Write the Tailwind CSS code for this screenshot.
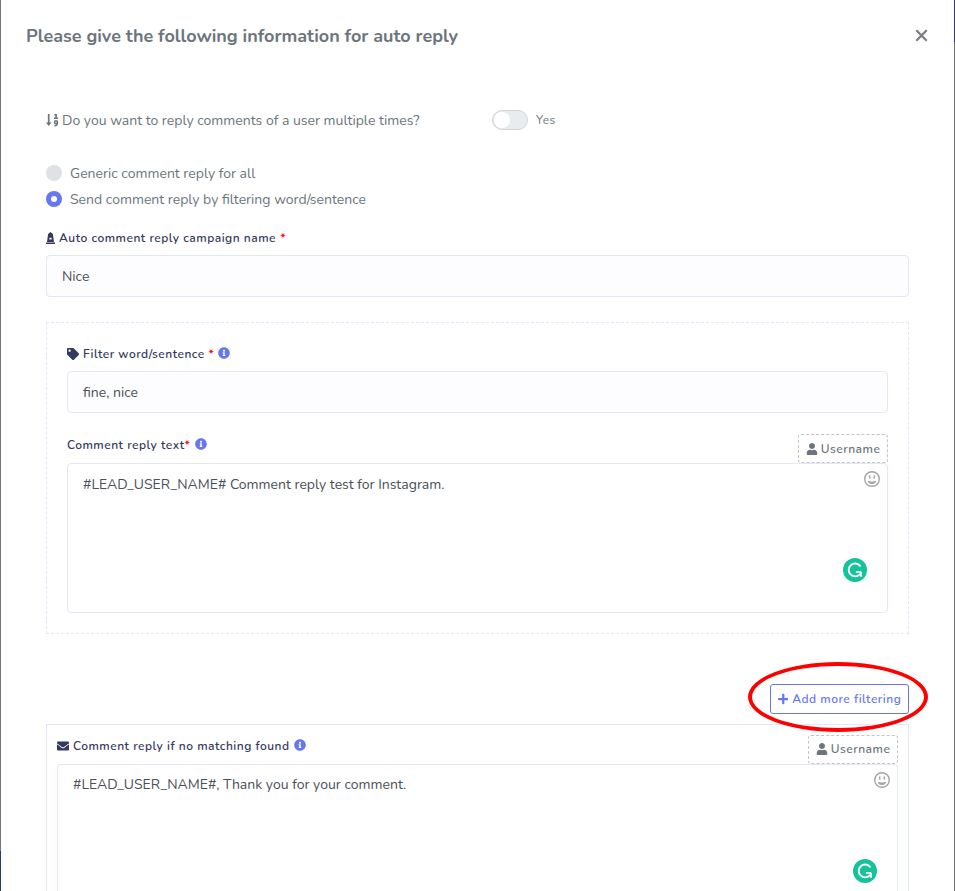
<!DOCTYPE html>
<html lang="en">
<head>
<meta charset="utf-8">
<title>Auto reply</title>
<script src="https://cdn.jsdelivr.net/npm/@tailwindcss/browser@4"></script>
</head>
<body class="h-[891px] overflow-hidden bg-white font-['Nunito','Lato',sans-serif] text-sm text-[#6c757d]">
<svg class="hidden">
  <symbol id="info" viewBox="0 0 512 512"><path fill="currentColor" d="M256 8C119.043 8 8 119.083 8 256c0 136.997 111.043 248 248 248s248-111.003 248-248C504 119.083 392.957 8 256 8zm0 110c23.196 0 42 18.804 42 42s-18.804 42-42 42-42-18.804-42-42 18.804-42 42-42zm56 254c0 6.627-5.373 12-12 12h-88c-6.627 0-12-5.373-12-12v-24c0-6.627 5.373-12 12-12h12v-64h-12c-6.627 0-12-5.373-12-12v-24c0-6.627 5.373-12 12-12h64c6.627 0 12 5.373 12 12v100h12c6.627 0 12 5.373 12 12v24z"/></symbol>
  <symbol id="user" viewBox="0 0 448 512"><path fill="currentColor" d="M224 256c70.7 0 128-57.3 128-128S294.7 0 224 0 96 57.3 96 128s57.3 128 128 128zm89.6 32h-16.7c-22.2 10.2-46.9 16-72.9 16s-50.6-5.8-72.9-16h-16.7C60.2 288 0 348.2 0 422.4V464c0 26.5 21.5 48 48 48h352c26.500 0 48-21.500 48-48v-41.600c0-74.200-60.200-134.400-134.400-134.400z"/></symbol>
  <symbol id="smile" viewBox="0 0 16 16"><circle cx="8" cy="8" r="7.300" fill="none" stroke="currentColor" stroke-width="1.400"/><rect x="5" y="4.200" width="1.500" height="3.600" rx=".75" fill="currentColor"/><rect x="9.500" y="4.200" width="1.500" height="3.600" rx=".75" fill="currentColor"/><path fill="currentColor" d="M3.800 9.700c2.600 1 5.800 1 8.400 0-.1 2-1.900 3.300-4.200 3.300s-4.100-1.300-4.200-3.300z"/></symbol>
  <symbol id="grammar" viewBox="0 0 24 24"><circle cx="12" cy="12" r="12" fill="#15c39a"/><path d="M17 7.800A6.400 6.400 0 1 0 16.800 16.300" fill="none" stroke="#fff" stroke-width="1.900" stroke-linecap="round"/><path d="M12.900 13.900h5.300M18 13.900v4.900" fill="none" stroke="#fff" stroke-width="1.800"/></symbol>
</svg>
<div class="flex h-full">
  <div class="flex w-px shrink-0 flex-col"><div class="h-[851px] bg-[#757575]"></div><div class="flex-1 bg-[#2f3773]"></div></div>
  <main class="w-[953px] shrink-0">
    <header class="flex h-[71px] items-center justify-between pr-[26px] pl-[25px]">
      <h1 class="text-lg font-bold">Please give the following information for auto reply</h1>
      <svg class="size-[13px]" viewBox="0 0 13 13" fill="none" stroke="#7d7b86" stroke-width="2.300"><path d="M1.300 1.300l10.400 10.400M11.700 1.300l-10.400 10.400"/></svg>
    </header>

    <div class="pr-[45px] pl-[45px]">
      <div class="mt-[38px] flex h-[22px] items-center">
        <svg class="mr-[3px] h-3.500 h-[14px] w-[13px]" viewBox="0 0 13 14" fill="none" stroke="currentColor"><path d="M2.700 1v10" stroke-width="1.700"/><path d="M-.1 9.400h5.600L2.700 13z" fill="currentColor" stroke="none"/><path d="M8.300 1.800h1.800v3.500M7.900 5.300h4.200" stroke-width="1.600"/><circle cx="10" cy="9.300" r="1.500" stroke-width="1.500"/><path d="M11.500 9.400c0 2.100-.8 3.300-3.100 3.300" stroke-width="1.500"/></svg>
        <span class="w-[430px] pt-0.5">Do you want to reply comments of a user multiple times?</span>
        <span class="flex h-5 w-9 items-center rounded-full border border-[#ced4da] bg-[#e9ecef] pl-px"><span class="size-4 rounded-full bg-white"></span></span>
        <span class="ml-2 text-xs tracking-[.5px]">Yes</span>
      </div>

      <div class="mt-[29px] flex h-[26px] items-center gap-2"><span class="size-4 rounded-full bg-[#dfe1e5]"></span><span class="pt-0.5">Generic comment reply for all</span></div>
      <div class="flex h-[26px] items-center gap-2"><span class="flex size-4 items-center justify-center rounded-full bg-[#6777ef]"><span class="size-1.5 rounded-full bg-white"></span></span><span class="pt-0.5">Send comment reply by filtering word/sentence</span></div>

      <div class="mt-[17px] flex h-[18px] items-center text-xs font-semibold tracking-[.5px] text-[#34395e]">
        <svg class="mr-1 h-3 w-[9px]" viewBox="0 0 9 12" fill="currentColor"><path fill-rule="evenodd" d="M4.500 0L6.900 2l1.100 8H1l1.100-8zM3.400 5.800v1.600h2.200V5.800z"/><rect y="10.500" width="9" height="1.500"/></svg>
        Auto comment reply campaign name&nbsp;<span class="ml-[.5px] text-[#f00]">*</span>
      </div>
      <div class="mt-2 flex h-[42px] items-center rounded-[4px] border border-[#e4e6fc] bg-[#fdfdff] px-[15px] pt-0.5 text-[#495057]">Nice</div>

      <section class="mt-[25px] h-[312px] border border-dashed border-[#e4e6fc] px-5 pt-[22px]">
        <div class="flex h-[18px] items-center text-xs font-semibold tracking-[.5px] text-[#34395e]">
          <svg class="mr-1 mb-px size-3" viewBox="0 0 512 512" fill="currentColor"><path d="M0 252.118V48C0 21.490 21.490 0 48 0h204.118a48 48 0 0 1 33.941 14.059l211.882 211.882c18.745 18.745 18.745 49.137 0 67.882L293.823 497.941c-18.745 18.745-49.137 18.745-67.882 0L14.059 286.059A48 48 0 0 1 0 252.118zM112 64c-26.510 0-48 21.490-48 48s21.490 48 48 48 48-21.490 48-48-21.490-48-48-48z"/></svg>
          Filter word/sentence&nbsp;<span class="text-[#f00]">*</span><svg class="mb-[2px] ml-[4px] size-3 text-[#6777ef]"><use href="#info"/></svg>
        </div>
        <div class="mt-2 flex h-[42px] items-center rounded-[4px] border border-[#e4e6fc] bg-[#fdfdff] px-[15px] pt-0.5 text-[#495057]">fine, nice</div>
        <div class="mt-[21px] flex h-[29px] justify-between text-xs font-semibold tracking-[.5px]">
          <div class="flex h-[22px] items-center text-[#34395e]">Comment reply text<span class="text-[#f00]">*</span><svg class="mb-[2px] ml-[5px] size-3 text-[#6777ef]"><use href="#info"/></svg></div>
          <div class="flex h-[29px] w-[90px] items-center justify-center rounded-[3px] border border-dashed border-[#c4c4c4]"><svg class="mr-[3px] h-3 w-[12px]"><use href="#user"/></svg>Username</div>
        </div>
        <div class="relative h-[150px] rounded-[4px] border border-[#e4e6fc] px-[15px] pt-[11px] text-[#495057]">#LEAD_USER_NAME# Comment reply test for Instagram.
          <svg class="absolute top-[7px] right-[7px] size-4 text-[#a5a5a5]"><use href="#smile"/></svg>
          <svg class="absolute top-[94px] right-5 size-6"><use href="#grammar"/></svg>
        </div>
      </section>

      <div class="mt-[50px] flex justify-end">
        <div class="relative flex h-[30px] w-[139px] items-center justify-center rounded-[3px] border border-[#6777ef] text-xs font-semibold tracking-[.5px] text-[#6777ef]">
          <svg class="mr-[4px] h-3 w-[10.5px]" viewBox="0 0 448 512" fill="currentColor"><path d="M416 208H272V64c0-17.670-14.330-32-32-32h-32c-17.670 0-32 14.330-32 32v144H32c-17.670 0-32 14.330-32 32v32c0 17.670 14.330 32 32 32h144v144c0 17.670 14.330 32 32 32h32c17.670 0 32-14.330 32-32V304h144c17.670 0 32-14.330 32-32v-32c0-17.670-14.330-32-32-32z"/></svg>Add more filtering
          <span class="absolute top-[-23px] left-[-23px] h-[70px] w-[180px] rounded-[50%] border-4 border-[#f00]"></span>
        </div>
      </div>

      <section class="mt-[10px] h-[167px] overflow-hidden border border-b-0 border-[#e4e6fc] px-[10px] pt-[10px]">
        <div class="flex h-[29px] justify-between text-xs font-semibold tracking-[.5px]">
          <div class="flex h-[22px] items-center text-[#34395e]"><svg class="mr-1 size-3" viewBox="0 0 512 512" fill="currentColor"><path d="M502.300 190.800c3.900-3.100 9.700-.2 9.700 4.700V400c0 26.500-21.500 48-48 48H48c-26.500 0-48-21.500-48-48V195.600c0-5 5.700-7.800 9.700-4.700 22.400 17.400 52.100 39.500 154.100 113.600 21.100 15.400 56.700 47.800 92.200 47.600 35.700.3 72-32.800 92.300-47.600 102-74.100 131.600-96.300 154-113.700zM256 320c23.200.4 56.600-29.200 73.400-41.400 132.700-96.300 142.800-104.700 173.400-128.700 5.800-4.500 9.200-11.500 9.200-18.900v-19c0-26.500-21.500-48-48-48H48c-26.500 0-48 21.500-48 48v19c0 7.400 3.400 14.300 9.200 18.900 30.600 23.900 40.700 32.400 173.400 128.700 16.800 12.200 50.200 41.800 73.400 41.400z"/></svg>Comment reply if no matching found<svg class="mb-[2px] ml-[4px] size-3 text-[#6777ef]"><use href="#info"/></svg></div>
          <div class="flex h-[29px] w-[90px] items-center justify-center rounded-[3px] border border-dashed border-[#c4c4c4] pb-[2px]"><svg class="mr-[3px] h-3 w-[12px]"><use href="#user"/></svg>Username</div>
        </div>
        <div class="relative h-[127px] rounded-t-[4px] border border-b-0 border-[#e4e6fc] px-[15px] pt-[10px] text-[#495057]">#LEAD_USER_NAME#, Thank you for your comment.
          <svg class="absolute top-[7px] right-[7px] size-4 text-[#a5a5a5]"><use href="#smile"/></svg>
          <svg class="absolute top-[94px] right-5 size-6"><use href="#grammar"/></svg>
        </div>
      </section>
    </div>
  </main>
  <div class="flex w-px shrink-0 flex-col"><div class="h-[42px] bg-[#2f3773]"></div><div class="flex-1 bg-[#757575]"></div></div>
</div>
</body>
</html>
